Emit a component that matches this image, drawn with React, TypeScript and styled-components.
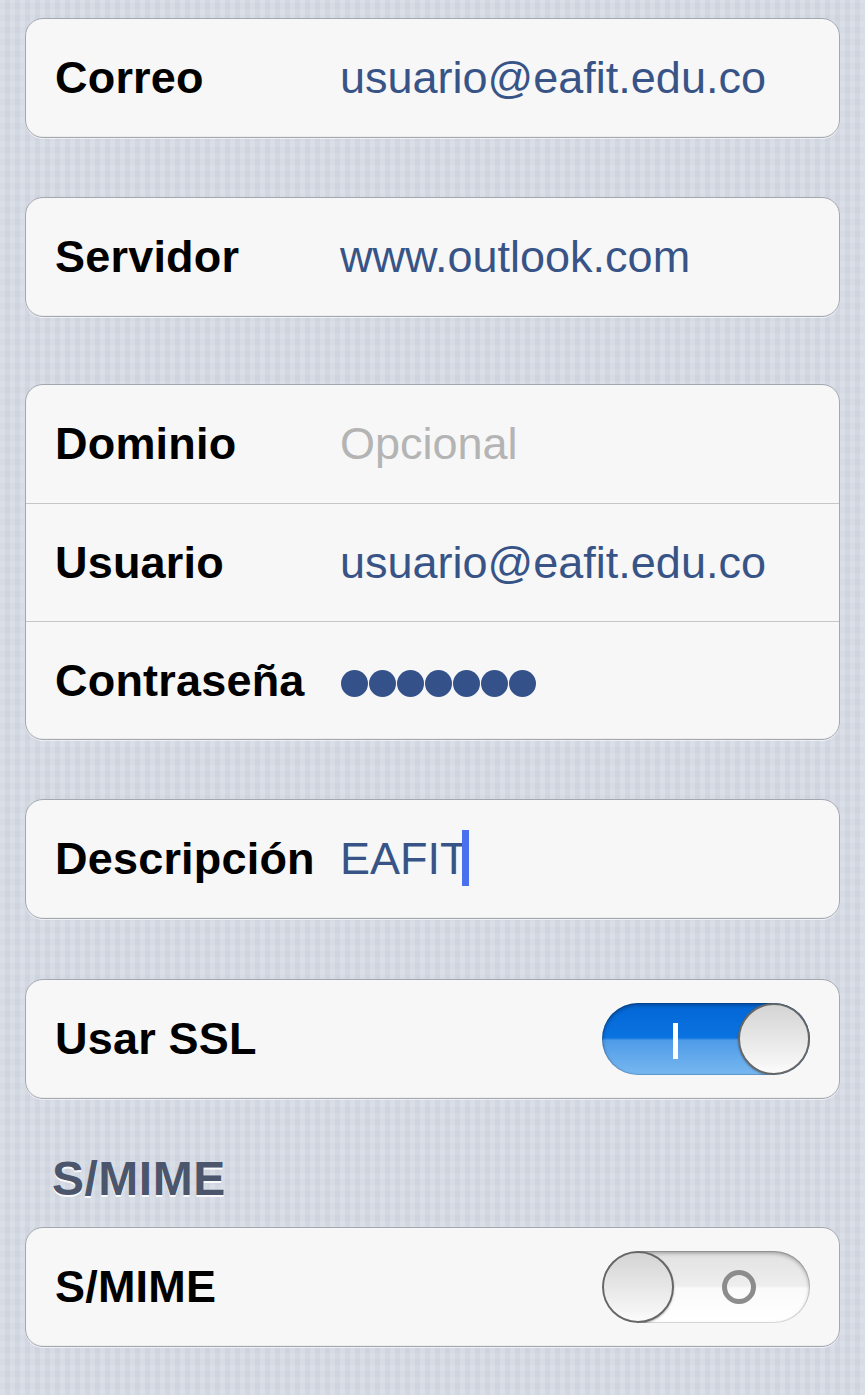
import styled, { createGlobalStyle } from "styled-components";

const Global = createGlobalStyle`
  html, body {
    margin: 0;
    padding: 0;
  }
  body {
    font-family: "Liberation Sans", Arial, sans-serif;
    background-color: #d5d9e3;
  }
`;

const Pantalla = styled.div`
  width: 865px;
  min-height: 1395px;
  box-sizing: border-box;
  padding: 18px 25px 40px 25px;
  background-color: #d4d9e3;
  background-image: repeating-linear-gradient(
      90deg,
      rgba(255, 255, 255, 0.1) 0 5px,
      rgba(150, 160, 180, 0.06) 5px 10px
    ),
    repeating-linear-gradient(
      0deg,
      rgba(255, 255, 255, 0.05) 0 6px,
      rgba(150, 160, 180, 0.03) 6px 12px
    );
`;

const Tarjeta = styled.div<{ $arriba?: number }>`
  margin-top: ${(p) => p.$arriba ?? 0}px;
  background: #f7f7f7;
  border: 1px solid #a2a7b0;
  border-radius: 18px;
  box-shadow: 0 1px 0 rgba(255, 255, 255, 0.6), inset 0 -1px 0 rgba(0, 0, 0, 0.04);
  overflow: hidden;
`;

const Fila = styled.div`
  height: 118px;
  box-sizing: border-box;
  display: flex;
  align-items: center;
  padding: 0 29px;
  & + & {
    border-top: 1px solid #c6c6c6;
  }
`;

const Etiqueta = styled.div`
  width: 285px;
  flex-shrink: 0;
  font-size: 45px;
  font-weight: bold;
  color: #000;
  letter-spacing: 0.2px;
`;

const Valor = styled.div<{ $gris?: boolean }>`
  font-size: 45px;
  color: ${(p) => (p.$gris ? "#b4b4b4" : "#385487")};
  display: flex;
  align-items: center;
  white-space: nowrap;
`;

const Cursor = styled.span`
  display: inline-block;
  width: 7px;
  height: 56px;
  background: #4a70ee;
  margin-left: -6px;
  margin-top: -2px;
`;

const Puntos = styled.div`
  display: flex;
  gap: 1px;
  margin-left: 1px;
  margin-top: 6px;
`;

const Punto = styled.span`
  width: 27px;
  height: 27px;
  border-radius: 50%;
  background: #34518a;
`;

const Encabezado = styled.div`
  margin: 52px 0 0 27px;
  height: 76px;
  font-size: 48px;
  font-weight: bold;
  color: #4b556b;
  letter-spacing: 0.5px;
  text-shadow: 0 2px 0 rgba(255, 255, 255, 0.9);
`;

const Espacio = styled.div`
  flex: 1;
`;

const Interruptor = styled.div<{ $on: boolean }>`
  position: relative;
  width: 208px;
  height: 72px;
  border-radius: 36px;
  box-sizing: border-box;
  overflow: hidden;
  background: ${(p) =>
    p.$on
      ? "linear-gradient(180deg, #0366d6 0%, #0a73e0 48%, #4f9be8 52%, #78b8f0 100%)"
      : "linear-gradient(180deg, #e1e1e1 0%, #eeeeee 48%, #fafafa 52%, #ffffff 100%)"};
  box-shadow: inset 0 2px 4px rgba(0, 0, 0, 0.35), inset 0 0 0 1px rgba(0, 0, 0, 0.12);
`;

const Perilla = styled.div<{ $on: boolean }>`
  position: absolute;
  top: 0;
  ${(p) => (p.$on ? "right: 0;" : "left: 0;")}
  width: 72px;
  height: 72px;
  box-sizing: border-box;
  border-radius: 50%;
  border: 2px solid #666;
  background: linear-gradient(180deg, #d4d4d4 0%, #ebebeb 60%, #fbfbfb 100%);
  box-shadow: 0 1px 2px rgba(0, 0, 0, 0.3);
`;

const MarcaI = styled.div`
  position: absolute;
  left: 71px;
  top: 20px;
  width: 5px;
  height: 36px;
  background: #fff;
`;

const MarcaO = styled.div`
  position: absolute;
  left: 120px;
  top: 19px;
  width: 34px;
  height: 34px;
  box-sizing: border-box;
  border-radius: 50%;
  border: 5px solid #8c8c8c;
`;

function Switch({ on }: { on: boolean }) {
  return (
    <Interruptor $on={on}>
      {on ? <MarcaI /> : <MarcaO />}
      <Perilla $on={on} />
    </Interruptor>
  );
}

export default function App() {
  return (
    <>
      <Global />
      <Pantalla>
        <Tarjeta>
          <Fila>
            <Etiqueta>Correo</Etiqueta>
            <Valor>usuario@eafit.edu.co</Valor>
          </Fila>
        </Tarjeta>

        <Tarjeta $arriba={59}>
          <Fila>
            <Etiqueta>Servidor</Etiqueta>
            <Valor>www.outlook.com</Valor>
          </Fila>
        </Tarjeta>

        <Tarjeta $arriba={67}>
          <Fila>
            <Etiqueta>Dominio</Etiqueta>
            <Valor $gris>Opcional</Valor>
          </Fila>
          <Fila>
            <Etiqueta>Usuario</Etiqueta>
            <Valor>usuario@eafit.edu.co</Valor>
          </Fila>
          <Fila>
            <Etiqueta>Contraseña</Etiqueta>
            <Puntos>
              {Array.from({ length: 7 }).map((_, i) => (
                <Punto key={i} />
              ))}
            </Puntos>
          </Fila>
        </Tarjeta>

        <Tarjeta $arriba={59}>
          <Fila>
            <Etiqueta>Descripción</Etiqueta>
            <Valor>
              EAFIT
              <Cursor />
            </Valor>
          </Fila>
        </Tarjeta>

        <Tarjeta $arriba={60}>
          <Fila>
            <Etiqueta>Usar SSL</Etiqueta>
            <Espacio />
            <Switch on={true} />
          </Fila>
        </Tarjeta>

        <Encabezado>S/MIME</Encabezado>

        <Tarjeta>
          <Fila>
            <Etiqueta>S/MIME</Etiqueta>
            <Espacio />
            <Switch on={false} />
          </Fila>
        </Tarjeta>
      </Pantalla>
    </>
  );
}
